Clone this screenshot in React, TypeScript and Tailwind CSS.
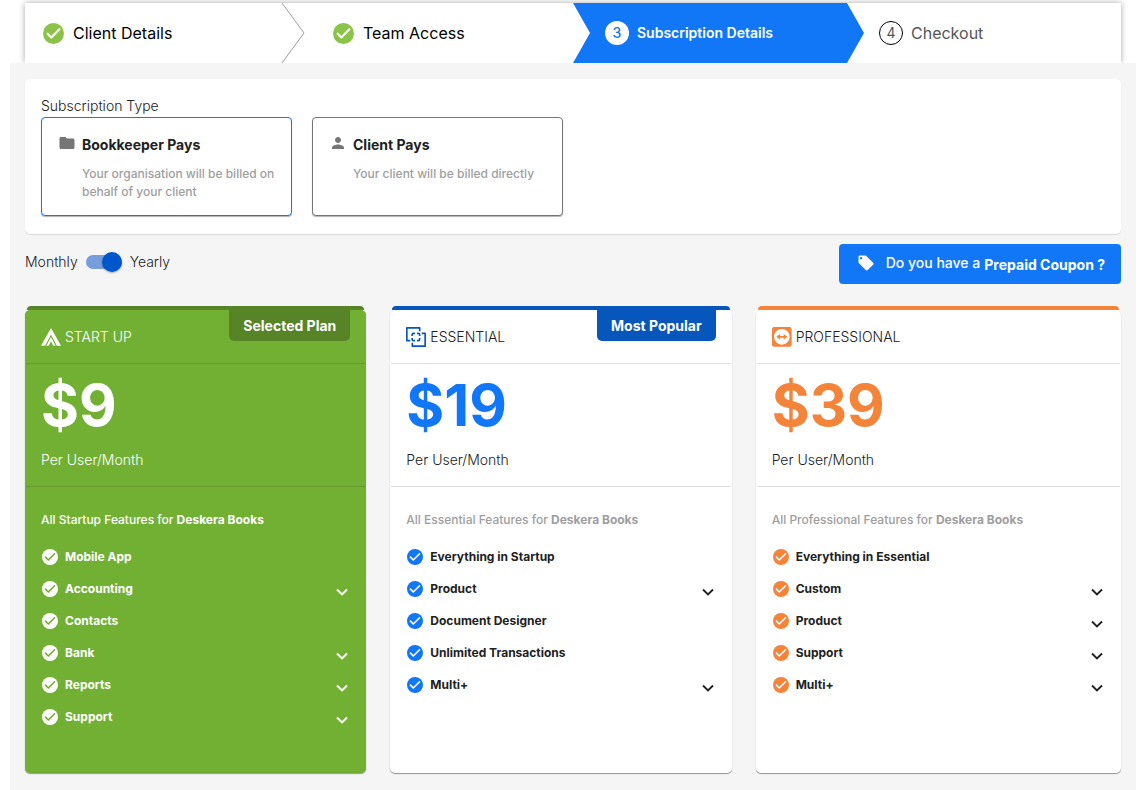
import { useState } from 'react'
import type { ReactNode } from 'react'
import clsx from 'clsx'
import { MdFolder, MdLocalOffer, MdPerson } from 'react-icons/md'

type Feature = { label: string; expandable?: boolean }

type Plan = {
  id: string
  name: string
  price: string
  tier: string
  badge?: string
  icon: ReactNode
  features: Feature[]
  bar: string
  card: string
  divider: string
  priceColor: string
  mutedColor: string
  checkColor: string
  tickColor: string
}

function CheckCircle({ className, tick }: { className: string; tick: string }) {
  return (
    <svg viewBox="0 0 20 20" className={clsx('shrink-0', className)} aria-hidden="true">
      <circle cx="10" cy="10" r="10" fill="currentColor" />
      <path
        d="M4.4 10.2l3.5 3.6 7.700-7.900"
        className={tick}
        fill="none"
        strokeWidth="2"
        strokeLinecap="round"
        strokeLinejoin="round"
      />
    </svg>
  )
}

function StartupIcon() {
  return (
    <svg viewBox="0 0 60 54" className="w-5 shrink-0" fill="currentColor" aria-hidden="true">
      <path d="M30 0L60 53H0z" />
      <path d="M14 54L30 23l16 31" className="fill-none stroke-[#72b033]" strokeWidth="3.5" />
      <path d="M23 54l7-14 7 14z" className="fill-[#72b033]" />
    </svg>
  )
}

function EssentialIcon() {
  return (
    <svg
      viewBox="0 0 60 60"
      className="w-5 shrink-0 fill-none stroke-[#0756bb]"
      strokeWidth="5"
      strokeLinejoin="round"
      aria-hidden="true"
    >
      <path d="M13 41H2.500V2.500H41V13M47 19h10.500v38.500H19V47" />
      <path d="M18.500 27v-4q0-4 4-4H27M33 19h4q4 0 4 4v4M41 33v4q0 4-4 4h-4M27 41h-4.500q-4 0-4-4v-4" />
    </svg>
  )
}

function ProfessionalIcon() {
  return (
    <svg viewBox="0 0 60 60" className="w-5 shrink-0" aria-hidden="true">
      <rect width="59" height="59" rx="6" className="fill-[#f3843a]" />
      <circle cx="29.500" cy="29.500" r="23.500" fill="white" />
      <path d="M13 29.500l11-8.500v6h11v-6l11 8.500-11 8.500v-6H24v6z" className="fill-[#f3843a]" />
    </svg>
  )
}

const plans: Plan[] = [
  {
    id: 'startup',
    name: 'START UP',
    price: '$9',
    tier: 'Startup',
    badge: 'Selected Plan',
    icon: <StartupIcon />,
    features: [
      { label: 'Mobile App' },
      { label: 'Accounting', expandable: true },
      { label: 'Contacts' },
      { label: 'Bank', expandable: true },
      { label: 'Reports', expandable: true },
      { label: 'Support', expandable: true },
    ],
    bar: 'bg-[#568427]',
    card: 'bg-[#72b033] text-white',
    divider: 'border-[#639a2d]',
    priceColor: 'text-white',
    mutedColor: 'text-white',
    checkColor: 'text-white',
    tickColor: 'stroke-[#72b033]',
  },
  {
    id: 'essential',
    name: 'ESSENTIAL',
    price: '$19',
    tier: 'Essential',
    badge: 'Most Popular',
    icon: <EssentialIcon />,
    features: [
      { label: 'Everything in Startup' },
      { label: 'Product', expandable: true },
      { label: 'Document Designer' },
      { label: 'Unlimited Transactions' },
      { label: 'Multi+', expandable: true },
    ],
    bar: 'bg-[#0756bb]',
    card: 'bg-white text-[#212121]',
    divider: 'border-[#dedede]',
    priceColor: 'text-[#1177f7]',
    mutedColor: 'text-[#9e9e9e]',
    checkColor: 'text-[#1177f7]',
    tickColor: 'stroke-white',
  },
  {
    id: 'professional',
    name: 'PROFESSIONAL',
    price: '$39',
    tier: 'Professional',
    icon: <ProfessionalIcon />,
    features: [
      { label: 'Everything in Essential' },
      { label: 'Custom', expandable: true },
      { label: 'Product', expandable: true },
      { label: 'Support', expandable: true },
      { label: 'Multi+', expandable: true },
    ],
    bar: 'bg-[#f3843a]',
    card: 'bg-white text-[#212121]',
    divider: 'border-[#dedede]',
    priceColor: 'text-[#f3843a]',
    mutedColor: 'text-[#9e9e9e]',
    checkColor: 'text-[#f3843a]',
    tickColor: 'stroke-white',
  },
]

const payers = [
  {
    id: 'bookkeeper',
    title: 'Bookkeeper Pays',
    text: 'Your organisation will be billed on behalf of your client',
    Icon: MdFolder,
  },
  {
    id: 'client',
    title: 'Client Pays',
    text: 'Your client will be billed directly',
    Icon: MdPerson,
  },
]

function Stepper() {
  return (
    <ol className="mt-[3px] ml-[25px] mr-5 grid h-[60px] grid-cols-[257fr_291fr_274fr_274fr] bg-white text-base text-black shadow-[0_0_6px_rgba(0,0,0,0.35)]">
      <li className="flex items-center gap-[9px] pl-[18px]">
        <CheckCircle className="w-[21px] text-[#8bc34a]" tick="stroke-white" />
        Client Details
      </li>
      <li className="flex items-center">
        <svg viewBox="0 0 23 60" className="h-full w-[23px] shrink-0" aria-hidden="true">
          <path d="M0 0l22 30L0 60" fill="none" stroke="#9e9e9e" />
        </svg>
        <div className="flex items-center gap-[9px] pl-7">
          <CheckCircle className="w-[21px] text-[#8bc34a]" tick="stroke-white" />
          Team Access
        </div>
      </li>
      <li
        aria-current="step"
        className="-mr-[17px] flex items-center gap-2 bg-[#1177f7] pl-8 text-sm font-semibold text-white [clip-path:polygon(0_0,calc(100%-17px)_0,100%_50%,calc(100%-17px)_100%,0_100%,17px_50%)]"
      >
        <span className="flex size-6 items-center justify-center rounded-full bg-white font-medium text-[#1177f7]">
          3
        </span>
        Subscription Details
      </li>
      <li className="flex items-center gap-2 pl-8 text-[#555]">
        <span className="flex size-6 items-center justify-center rounded-full border border-black text-sm">
          4
        </span>
        Checkout
      </li>
    </ol>
  )
}

function PlanCard({ plan }: { plan: Plan }) {
  return (
    <div className="flex flex-col pr-6 last:pr-0">
      <div className={clsx('mx-[2px] h-1 rounded-t', plan.bar)} />
      <section
        className={clsx(
          'grow rounded-[5px] pb-10 shadow-[0_1px_1px_rgba(0,0,0,0.4)]',
          plan.card,
        )}
      >
        <header
          className={clsx(
            'mx-px flex h-[54px] items-start justify-between border-b px-[15px]',
            plan.divider,
          )}
        >
          <h2 className="flex h-[53px] items-center gap-1 text-sm font-light">
            {plan.icon}
            {plan.name}
          </h2>
          {plan.badge && (
            <span
              className={clsx(
                'rounded-b-[5px] px-[14px] pt-1.5 pb-[5px] text-sm font-bold text-white',
                plan.bar,
              )}
            >
              {plan.badge}
            </span>
          )}
        </header>

        <div className={clsx('mx-px border-b px-[15px] pt-1 pb-4', plan.divider)}>
          <p className={clsx('text-[58px] leading-[74px] font-bold', plan.priceColor)}>
            {plan.price}
          </p>
          <p className="mt-2 text-sm font-light">Per User/Month</p>
        </div>

        <div className="px-4 pt-6 text-xs">
          <p className={clsx('mb-3 leading-[18px] font-medium', plan.mutedColor)}>
            All {plan.tier} Features for <b className="font-bold">Deskera Books</b>
          </p>
          <ul>
            {plan.features.map((feature) => (
              <li key={feature.label} className="flex h-8 items-center font-bold">
                <CheckCircle
                  className={clsx('mx-px mr-[7px] w-4', plan.checkColor)}
                  tick={plan.tickColor}
                />
                {feature.label}
                {feature.expandable && (
                  <button
                    type="button"
                    aria-label={`Expand ${feature.label}`}
                    className="ml-auto cursor-pointer pt-1.5"
                  >
                    <svg viewBox="0 0 16 16" className="size-4" aria-hidden="true">
                      <path
                        d="M3 5.500l5 5 5-5"
                        fill="none"
                        stroke="currentColor"
                        strokeWidth="1.9"
                      />
                    </svg>
                  </button>
                )}
              </li>
            ))}
          </ul>
        </div>
      </section>
    </div>
  )
}

export default function App() {
  const [payer, setPayer] = useState('bookkeeper')
  const [yearly, setYearly] = useState(true)

  return (
    <div className="flex min-h-screen flex-col bg-white font-['Inter',sans-serif] text-[#212121]">
      <Stepper />

      <main className="mr-[5px] ml-[10px] grow bg-[#f5f5f5] px-[15px] py-4">
        <section className="rounded-[5px] bg-white px-4 pt-4 pb-[18px] shadow-[0_1px_1px_rgba(0,0,0,0.12)]">
          <h1 className="text-sm leading-[22px] font-light">Subscription Type</h1>
          <div className="flex gap-5">
            {payers.map(({ id, title, text, Icon }) => (
              <button
                key={id}
                type="button"
                aria-pressed={payer === id}
                onClick={() => setPayer(id)}
                className={clsx(
                  'flex h-[99px] w-[251px] cursor-pointer items-start gap-1.5 rounded border bg-white px-4 pt-4 text-left shadow-[0_1px_1px_rgba(0,0,0,0.3)]',
                  payer === id ? 'border-[#1177f7]' : 'border-[#757575]',
                )}
              >
                <Icon className="size-[18px] shrink-0 text-[#757575]" />
                <span>
                  <span className="block text-sm leading-[22px] font-bold">{title}</span>
                  <span className="mt-[9px] block text-xs leading-[18px] font-medium text-[#9e9e9e]">
                    {text}
                  </span>
                </span>
              </button>
            ))}
          </div>
        </section>

        <div className="mt-[10px] flex items-center justify-between">
          <label className="flex cursor-pointer items-center gap-2 pb-1 text-sm font-light">
            Monthly
            <input
              type="checkbox"
              role="switch"
              checked={yearly}
              onChange={(e) => setYearly(e.target.checked)}
              className="peer sr-only"
            />
            <span className="flex h-[14px] w-9 items-center rounded-full bg-gray-400 peer-checked:justify-end peer-checked:bg-[#769ddc]">
              <span className="size-5 shrink-0 rounded-full bg-[#0057cc] shadow-[0_1px_2px_rgba(0,0,0,0.3)]" />
            </span>
            Yearly
          </label>
          <button
            type="button"
            className="flex h-10 cursor-pointer items-center rounded bg-[#1177f7] pr-4 pb-0.5 pl-[18px] text-sm text-white"
          >
            <MdLocalOffer className="mr-[11px] size-[18px]" />
            <span className="mr-1 font-medium">Do you have a</span>
            <b className="pt-1 font-bold">Prepaid Coupon ?</b>
          </button>
        </div>

        <div className="mt-[22px] grid grid-cols-3">
          {plans.map((plan) => (
            <PlanCard key={plan.id} plan={plan} />
          ))}
        </div>
      </main>
    </div>
  )
}
